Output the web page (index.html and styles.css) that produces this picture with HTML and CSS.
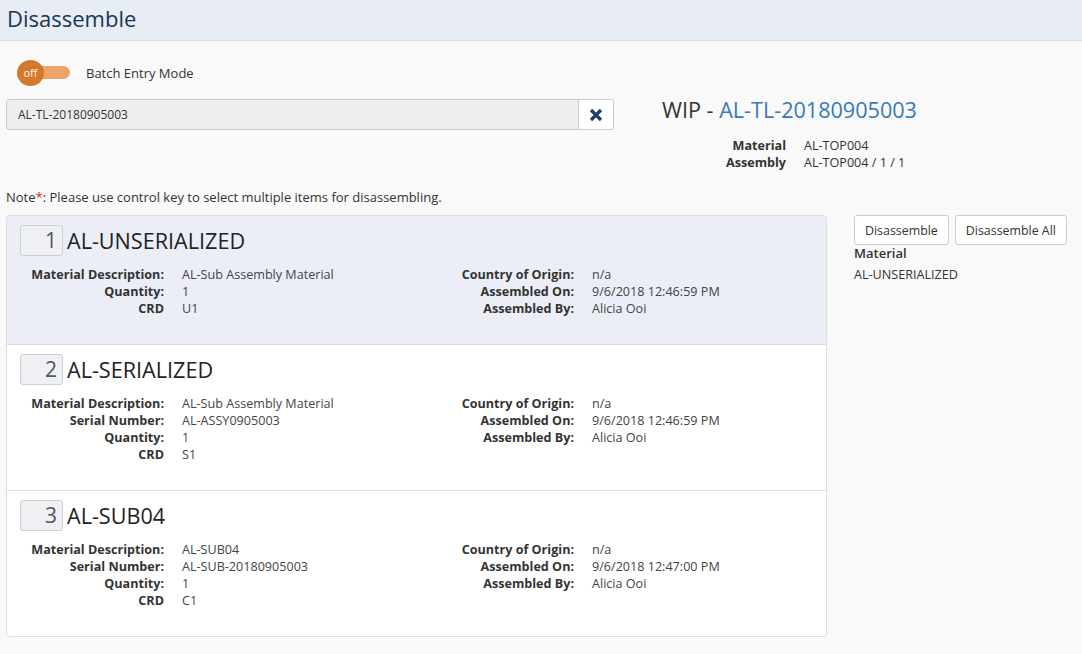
FILE: index.html
```html
<!DOCTYPE html>
<html>
<head>
<meta charset="utf-8">
<link rel="stylesheet" href="styles.css">
</head>
<body>
<header class="page-header"><h1>Disassemble</h1></header>
<main class="content">
  <div class="batch-row">
    <span class="toggle"><span class="toggle-knob">off</span></span>
    <span class="batch-label">Batch Entry Mode</span>
  </div>
  <div class="top-row">
    <div class="search">
      <input class="search-input" type="text" value="AL-TL-20180905003">
      <button class="clear-btn" type="button">
        <svg width="14" height="14" viewBox="0 0 14 14"><path d="M2 2 L12 12 M12 2 L2 12" stroke="#1e3f6e" stroke-width="3.2" stroke-linecap="butt"/></svg>
      </button>
    </div>
    <div class="wip">
      <div class="wip-title">WIP - <a class="wip-link">AL-TL-20180905003</a></div>
      <div class="wip-info">
        <span class="wi-label">Material</span><span class="wi-value">AL-TOP004</span>
        <span class="wi-label">Assembly</span><span class="wi-value">AL-TOP004 / 1 / 1</span>
      </div>
    </div>
  </div>
  <p class="note">Note<span class="req">*</span>: Please use control key to select multiple items for disassembling.</p>
  <div class="main-row">
    <div class="item-list">
      <div class="item selected">
        <div class="item-head"><span class="num">1</span><span class="item-name">AL-UNSERIALIZED</span></div>
        <div class="details">
          <dl class="col">
            <dt>Material Description:</dt><dd>AL-Sub Assembly Material</dd>
            <dt>Quantity:</dt><dd>1</dd>
            <dt>CRD</dt><dd>U1</dd>
          </dl>
          <dl class="col">
            <dt>Country of Origin:</dt><dd>n/a</dd>
            <dt>Assembled On:</dt><dd>9/6/2018 12:46:59 PM</dd>
            <dt>Assembled By:</dt><dd>Alicia Ooi</dd>
          </dl>
        </div>
      </div>
      <div class="item">
        <div class="item-head"><span class="num">2</span><span class="item-name">AL-SERIALIZED</span></div>
        <div class="details">
          <dl class="col">
            <dt>Material Description:</dt><dd>AL-Sub Assembly Material</dd>
            <dt>Serial Number:</dt><dd>AL-ASSY0905003</dd>
            <dt>Quantity:</dt><dd>1</dd>
            <dt>CRD</dt><dd>S1</dd>
          </dl>
          <dl class="col">
            <dt>Country of Origin:</dt><dd>n/a</dd>
            <dt>Assembled On:</dt><dd>9/6/2018 12:46:59 PM</dd>
            <dt>Assembled By:</dt><dd>Alicia Ooi</dd>
          </dl>
        </div>
      </div>
      <div class="item">
        <div class="item-head"><span class="num">3</span><span class="item-name">AL-SUB04</span></div>
        <div class="details">
          <dl class="col">
            <dt>Material Description:</dt><dd>AL-SUB04</dd>
            <dt>Serial Number:</dt><dd>AL-SUB-20180905003</dd>
            <dt>Quantity:</dt><dd>1</dd>
            <dt>CRD</dt><dd>C1</dd>
          </dl>
          <dl class="col">
            <dt>Country of Origin:</dt><dd>n/a</dd>
            <dt>Assembled On:</dt><dd>9/6/2018 12:47:00 PM</dd>
            <dt>Assembled By:</dt><dd>Alicia Ooi</dd>
          </dl>
        </div>
      </div>
    </div>
    <aside class="side">
      <div class="btns">
        <button class="btn" type="button">Disassemble</button>
        <button class="btn" type="button">Disassemble All</button>
      </div>
      <div class="side-label">Material</div>
      <div class="side-value">AL-UNSERIALIZED</div>
    </aside>
  </div>
</main>
</body>
</html>
```
FILE: styles.css
```css
* { box-sizing: border-box; }
html, body { margin: 0; padding: 0; }
body {
  background: #f9f9f9;
  font-family: "Open Sans", "Noto Sans", sans-serif;
  color: #333;
  font-size: 12.6px;
  width: 1082px;
  height: 654px;
  overflow: hidden;
}
.page-header {
  height: 41px;
  background: #e8ecf4;
  border-bottom: 1px solid #d9dde6;
  padding: 0 7px;
}
.page-header h1 {
  margin: 0;
  font-weight: 400;
  font-size: 22px;
  line-height: 36px;
  color: #173656;
}
.content { padding: 0 6px; }
.batch-row {
  display: flex;
  align-items: center;
  height: 26px;
  margin-top: 19px;
  padding-left: 11px;
}
.toggle {
  position: relative;
  display: inline-block;
  width: 53px;
  height: 26px;
}
.toggle::before {
  content: "";
  position: absolute;
  left: 13px;
  right: 0;
  top: 6px;
  height: 13px;
  border-radius: 7px;
  background: #eba46a;
}
.toggle-knob {
  position: absolute;
  left: 0;
  top: 0;
  width: 27px;
  height: 26px;
  border-radius: 50%;
  background: #d27a2a;
  color: #fff8e8;
  font-size: 11px;
  line-height: 25px;
  text-align: center;
}
.batch-label {
  margin-left: 16px;
  font-size: 13px;
  color: #333;
}
.top-row {
  display: flex;
  margin-top: 13px;
}
.search {
  display: flex;
  width: 608px;
  height: 31px;
}
.search-input {
  flex: 1;
  height: 31px;
  border: 1px solid #c8c8c8;
  border-radius: 3px 0 0 3px;
  background: #eeeeee;
  padding: 0 11px;
  font-family: inherit;
  font-size: 12px;
  color: #333;
  outline: none;
}
.clear-btn {
  width: 35px;
  height: 31px;
  border: 1px solid #cccccc;
  border-left: none;
  border-radius: 0 3px 3px 0;
  background: #fff;
  display: flex;
  align-items: center;
  justify-content: center;
  padding: 0;
}
.wip { margin-left: 48px; }
.wip-title {
  font-size: 21.6px;
  line-height: 26px;
  color: #333;
  margin-top: -2px;
}
.wip-link { color: #3a78b8; }
.wip-info {
  display: grid;
  grid-template-columns: 124px auto;
  column-gap: 18px;
  margin-top: 14px;
  font-size: 12.6px;
  line-height: 17px;
}
.wi-label { text-align: right; font-weight: 700; }
.note {
  margin: 17px 0 0;
  font-size: 13px;
  line-height: 18px;
}
.req { color: #e02020; }
.main-row {
  display: flex;
  margin-top: 9px;
  align-items: flex-start;
}
.item-list {
  width: 821px;
  flex-shrink: 0;
  border: 1px solid #dddddd;
  border-radius: 4px;
  background: #fff;
  overflow: hidden;
}
.item {
  padding: 9px 13px 27px;
  border-top: 1px solid #dddddd;
}
.item:first-child { border-top: none; }
.item.selected { background: #ebeef6; }
.item-head {
  display: flex;
  align-items: center;
  height: 31px;
}
.num {
  width: 43px;
  height: 31px;
  border: 1px solid #cfcfcf;
  border-radius: 3px;
  background: #eef0f4;
  text-align: right;
  padding-right: 5px;
  font-size: 21px;
  line-height: 29px;
  color: #555;
}
.item-name {
  margin-left: 4px;
  font-size: 21.6px;
  color: #222;
}
.details {
  display: flex;
  margin-top: 10px;
}
.col {
  display: grid;
  grid-template-columns: 144px auto;
  column-gap: 18px;
  width: 410px;
  flex-shrink: 0;
  margin: 0;
  line-height: 17px;
  font-size: 12.6px;
  align-content: start;
}
.col dt { text-align: right; font-weight: 700; color: #333; }
.col dd { margin: 0; color: #444; }
.side {
  margin-left: 27px;
}
.btns { display: flex; gap: 6px; }
.btn {
  height: 30px;
  border: 1px solid #cccccc;
  border-radius: 3px;
  background: #fff;
  font-family: inherit;
  font-size: 12.4px;
  color: #333;
  padding: 0 10px;
}
.side-label {
  font-size: 13px;
  font-weight: 600;
  line-height: 18px;
  margin-top: -1px;
}
.side-value {
  margin-top: 4px;
  font-size: 12.6px;
  line-height: 17px;
}
```
